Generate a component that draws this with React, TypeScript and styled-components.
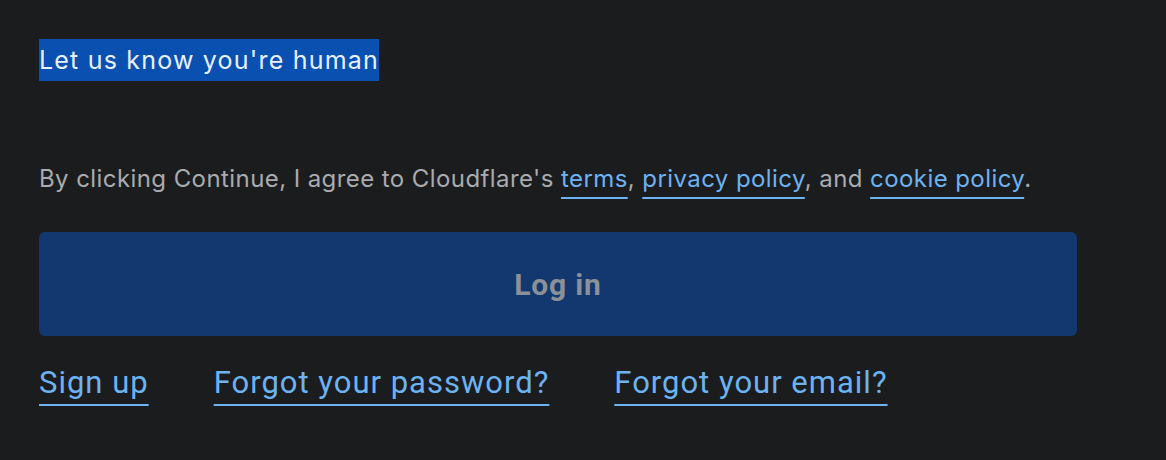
import React from "react";
import styled, { createGlobalStyle } from "styled-components";

const Global = createGlobalStyle`
  html, body { margin: 0; padding: 0; background: #1b1c1e; }
  body { font-family: Inter, "Noto Sans", sans-serif; }
`;

const Page = styled.main`
  box-sizing: border-box;
  width: 1166px;
  height: 460px;
  padding: 39px 0 0 39px;
  background: #1b1c1e;
  display: flex;
  flex-direction: column;
`;

const Heading = styled.h1`
  margin: 0;
  font-size: 25px;
  font-weight: 400;
  letter-spacing: 1.2px;
  line-height: 42px;
  color: #e8f0ff;
`;

const Selected = styled.span`
  display: inline-block;
  background: #0a50b0;
`;

const Terms = styled.p`
  margin: 81px 0 0;
  font-size: 24px;
  letter-spacing: 0.42px;
  line-height: 34px;
  color: #a9abae;
`;

const InlineLink = styled.a`
  color: #6db3f2;
  text-decoration: underline;
  text-decoration-thickness: 2px;
  text-underline-offset: 10px;
`;

const Button = styled.button`
  margin-top: 36px;
  width: 1038px;
  height: 104px;
  border: none;
  border-radius: 6px;
  background: #133870;
  color: #8c9097;
  font-family: Roboto, "Noto Sans", sans-serif;
  font-size: 30px;
  font-weight: 700;
  letter-spacing: 0.8px;
  cursor: not-allowed;
`;

const LinkRow = styled.nav`
  display: flex;
  gap: 65px;
  margin-top: 27px;
`;

const BottomLink = styled.a`
  font-family: Roboto, "Noto Sans", sans-serif;
  font-size: 31px;
  letter-spacing: 1px;
  line-height: 40px;
  color: #6db3f2;
  text-decoration: underline;
  text-decoration-thickness: 2px;
  text-underline-offset: 11px;
`;

export default function App() {
  return (
    <>
      <Global />
      <Page>
        <Heading>
          <Selected>Let us know you're human</Selected>
        </Heading>
        <Terms>
          By clicking Continue, I agree to Cloudflare's{" "}
          <InlineLink href="#">terms</InlineLink>,{" "}
          <InlineLink href="#">privacy policy</InlineLink>, and{" "}
          <InlineLink href="#">cookie policy</InlineLink>.
        </Terms>
        <div>
          <Button disabled>Log in</Button>
        </div>
        <LinkRow>
          <BottomLink href="#">Sign up</BottomLink>
          <BottomLink href="#">Forgot your password?</BottomLink>
          <BottomLink href="#">Forgot your email?</BottomLink>
        </LinkRow>
      </Page>
    </>
  );
}
